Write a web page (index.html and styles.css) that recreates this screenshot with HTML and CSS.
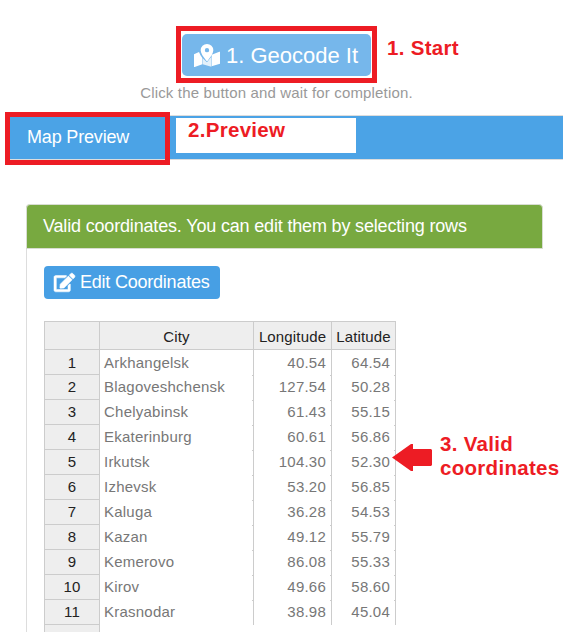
FILE: index.html
```html
<!DOCTYPE html>
<html lang="en">
<head>
<meta charset="utf-8">
<title>Geocode</title>
<link rel="stylesheet" href="styles.css">
</head>
<body>
<section class="start">
  <button class="btn btn-geocode">
    <svg class="icon-map" viewBox="0 0 78 69"><path fill="#fff" d="M0 31 15 24Q19 35 25 42V61L2 69H0zM53 32 76 23H78V59L53 67z"/><path fill="#e4f1fb" d="M26 43 39 55 52 38V68L26 61z"/><path fill="#fff" fill-rule="evenodd" d="M39 0a19 19 0 0 1 19 19c0 9-8 20-17 31q-2 2-4 0C28 39 20 28 20 19A19 19 0 0 1 39 0zm0 12a6.500 6.500 0 1 0 0 13 6.500 6.500 0 0 0 0-13z"/></svg>
    <span>1. Geocode It</span>
  </button>
  <p class="hint">Click the button and wait for completion.</p>
</section>
<nav class="tabs"><a class="tab">Map Preview</a></nav>
<section class="panel">
  <h2 class="panel-head">Valid coordinates. You can edit them by selecting rows</h2>
  <div class="panel-body">
    <button class="btn btn-edit">
      <svg class="icon-edit" viewBox="0 0 576 512"><path fill="currentColor" stroke="currentColor" stroke-width="14" d="M402.600 83.200l90.200 90.200c3.800 3.800 3.800 10 0 13.800L274.400 405.600l-92.800 10.300c-12.400 1.400-22.900-9.100-21.500-21.500l10.300-92.800L388.800 83.200c3.800-3.800 10-3.800 13.800 0zm162-22.900l-48.800-48.800c-15.200-15.200-39.900-15.200-55.200 0l-35.400 35.400c-3.800 3.800-3.800 10 0 13.800l90.200 90.200c3.800 3.800 10 3.800 13.800 0l35.400-35.400c15.200-15.300 15.200-40 0-55.200zM384 346.200V448H64V128h229.800c3.200 0 6.200-1.300 8.500-3.500l40-40c7.600-7.600 2.200-20.500-8.500-20.500H48C21.500 64 0 85.500 0 112v352c0 26.500 21.500 48 48 48h352c26.500 0 48-21.500 48-48V306.200c0-10.700-12.900-16-20.500-8.500l-40 40c-2.200 2.300-3.500 5.300-3.500 8.500z"/></svg>
      <span>Edit Coordinates</span>
    </button>
    <table class="grid">
      <colgroup><col class="c-num"><col class="c-city"><col class="c-lon"><col class="c-lat"></colgroup>
      <thead><tr><th></th><th>City</th><th>Longitude</th><th>Latitude</th></tr></thead>
      <tbody>
        <tr><th>1</th><td>Arkhangelsk</td><td>40.54</td><td>64.54</td></tr>
        <tr><th>2</th><td>Blagoveshchensk</td><td>127.54</td><td>50.28</td></tr>
        <tr><th>3</th><td>Chelyabinsk</td><td>61.43</td><td>55.15</td></tr>
        <tr><th>4</th><td>Ekaterinburg</td><td>60.61</td><td>56.86</td></tr>
        <tr><th>5</th><td>Irkutsk</td><td>104.30</td><td>52.30</td></tr>
        <tr><th>6</th><td>Izhevsk</td><td>53.20</td><td>56.85</td></tr>
        <tr><th>7</th><td>Kaluga</td><td>36.28</td><td>54.53</td></tr>
        <tr><th>8</th><td>Kazan</td><td>49.12</td><td>55.79</td></tr>
        <tr><th>9</th><td>Kemerovo</td><td>86.08</td><td>55.33</td></tr>
        <tr><th>10</th><td>Kirov</td><td>49.66</td><td>58.60</td></tr>
        <tr><th>11</th><td>Krasnodar</td><td>38.98</td><td>45.04</td></tr>
        <tr class="last"><th>12</th><td></td><td></td><td></td></tr>
      </tbody>
    </table>
  </div>
</section>
<div class="mark mark-start"></div>
<div class="note note-start">1. Start</div>
<div class="mark mark-preview"></div>
<div class="note note-preview">2.Preview</div>
<svg class="arrow" viewBox="0 0 40 27"><path fill="#ed1c24" d="M0 13.500 19 0h2v5h18l1 1v15l-1 1H21v5h-2z"/></svg>
<div class="note note-valid">3. Valid<br>coordinates</div>
</body>
</html>
```
FILE: styles.css
```css
* { box-sizing: border-box; }
body {
  margin: 0;
  position: relative;
  width: 563px;
  height: 632px;
  overflow: hidden;
  background: #fff;
  font-family: "Liberation Sans", Arial, sans-serif;
}
.start {
  height: 115px;
  padding-top: 34px;
  display: flex;
  flex-direction: column;
  align-items: center;
  padding-right: 10px;
}
.btn {
  display: flex;
  align-items: center;
  border: 0;
  color: #fff;
  font-family: inherit;
  white-space: nowrap;
}
.btn-geocode {
  width: 189px;
  height: 42px;
  padding: 0 0 0 12px;
  gap: 6px;
  border-radius: 5px;
  background: #76b7eb;
  font-size: 22px;
}
.btn-geocode span { padding-top: 1px; }
.icon-map { width: 26px; height: 23px; }
.hint {
  margin: 8px 0 0;
  line-height: 18px;
  font-size: 15px;
  letter-spacing: 0.16px;
  color: #999;
}
.tabs {
  display: flex;
  height: 45px;
  margin-left: 10px;
  border: 1px solid #ddd;
  border-width: 1px 0;
  background: #4ba3e6;
}
.tab {
  padding-left: 17px;
  line-height: 42px;
  font-size: 18px;
  letter-spacing: -0.17px;
  color: #fff;
}
.panel {
  width: 517px;
  height: 440px;
  margin: 44px 0 0 26px;
  border-left: 1px solid #ddd;
  border-radius: 4px 0 0 0;
}
.panel-head {
  height: 45px;
  margin: 0 0 0 -1px;
  padding-left: 16px;
  border: 1px solid #d8ddd2;
  border-radius: 4px 4px 0 0;
  background: #78a940;
  color: #fff;
  font-size: 18px;
  font-weight: 400;
  letter-spacing: -0.17px;
  line-height: 42px;
  white-space: nowrap;
}
.panel-body { padding: 17px 0 0 17px; }
.btn-edit {
  width: 176px;
  height: 33px;
  padding: 0 0 0 10px;
  gap: 5px;
  border-radius: 4px;
  background: #479fe4;
  font-size: 18px;
  letter-spacing: -0.22px;
}
.icon-edit { width: 21px; height: 19px; overflow: visible; }
.grid {
  width: 352px;
  margin-top: 22px;
  table-layout: fixed;
  border-collapse: separate;
  border-spacing: 0;
  border-left: 1px solid #ccc;
  border-top: 1px solid #ccc;
  font-size: 15px;
  letter-spacing: 0.23px;
  color: #777;
}
.c-num { width: 55px; }
.c-city { width: 154px; }
.c-lon { width: 78px; }
.c-lat { width: 64px; }
.grid th, .grid td {
  height: 25px;
  padding: 1px 0;
  line-height: 22px;
  border-right: 1px solid #ccc;
  white-space: nowrap;
}
.grid th {
  background: #eee;
  border-bottom: 1px solid #ccc;
  font-weight: 400;
  color: #222;
}
.grid thead th { height: 28px; padding: 3px 0 0; letter-spacing: 0.15px; }
.grid td { padding: 0 5px 1px 0; text-align: right; }
.grid td:nth-child(2) { padding-left: 4px; text-align: left; }
.grid tbody tr:first-child th { padding: 2px 0 0; }
.grid tbody tr:first-child td { padding-top: 2px; }
.grid tr + tr td {
  background: linear-gradient(#ccc, #ccc) right top / 1px 1px no-repeat padding-box;
}
.grid .last td { border: 0; background: none; }
.mark { position: absolute; border: 5px solid #ed1c24; }
.mark-start { left: 176px; top: 26px; width: 201px; height: 57px; }
.mark-preview { left: 5px; top: 112px; width: 165px; height: 53px; }
.note {
  position: absolute;
  color: #ed1c24;
  font-size: 20.500px;
  font-weight: 700;
  letter-spacing: 0.3px;
  line-height: 24px;
  white-space: nowrap;
}
.note-start { left: 387px; top: 36px; }
.note-preview {
  left: 176px;
  top: 118px;
  width: 180px;
  height: 35px;
  padding-left: 12px;
  background: #fff;
}
.note-valid { left: 440px; top: 432px; }
.arrow { position: absolute; left: 392px; top: 444px; width: 40px; height: 27px; }
```
